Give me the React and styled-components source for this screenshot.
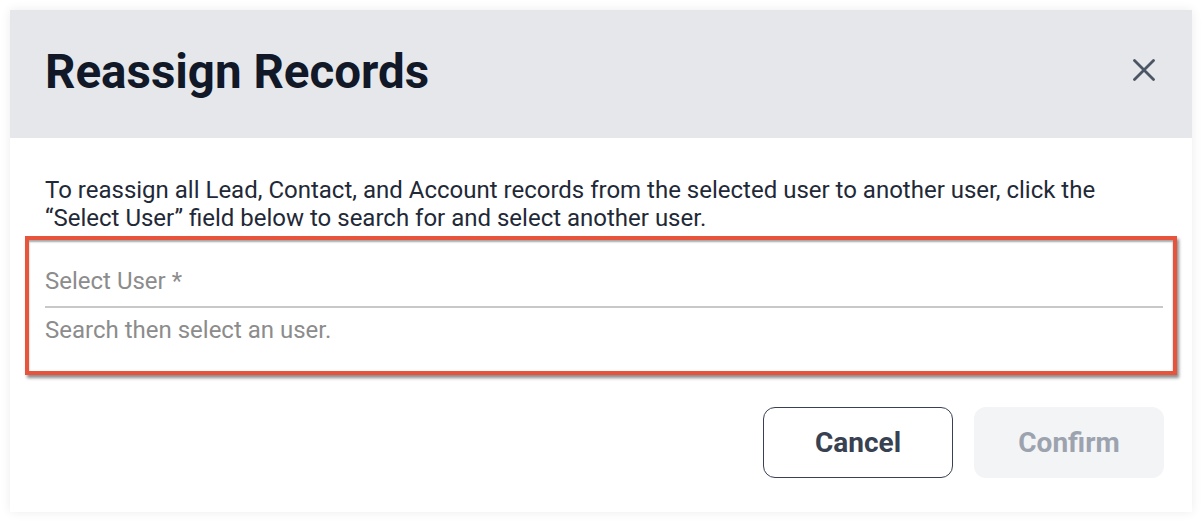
import React from "react";
import styled, { createGlobalStyle } from "styled-components";

const GlobalStyle = createGlobalStyle`
    html, body {
        margin: 0;
        padding: 0;
        background: #ffffff;
        font-family: Roboto, "Liberation Sans", sans-serif;
    }
`;

const Page = styled.div`
    padding: 10px;
`;

const Dialog = styled.div`
    width: 1182px;
    height: 502px;
    background: #ffffff;
    box-shadow: 0 0 10px rgba(0, 0, 0, 0.08);
    display: flex;
    flex-direction: column;
`;

const Header = styled.div`
    height: 128px;
    background: #e5e7eb;
    display: flex;
    align-items: center;
    justify-content: space-between;
    padding: 0 37px 8px 35px;
    box-sizing: border-box;
`;

const Title = styled.h2`
    margin: 3px 0 0;
    font-size: 47.5px;
    font-weight: 700;
    color: #111827;
    letter-spacing: 0;
`;

const CloseButton = styled.button`
    border: none;
    background: none;
    padding: 0;
    width: 22px;
    height: 22px;
    cursor: pointer;
    display: flex;
`;

const Body = styled.div`
    flex: 1;
    padding: 38px 28px 0 35px;
    display: flex;
    flex-direction: column;
`;

const Intro = styled.p`
    margin: 0;
    font-size: 24px;
    line-height: 28px;
    color: #1f2937;
`;

// red annotation frame drawn around the field in the screenshot
const Highlight = styled.div`
    margin: 4px -13px 0 -20px;
    border: 4px solid #e8533b;
    padding: 27px 10px 27px 16px;
    box-shadow: 2px 3px 3px rgba(0, 0, 0, 0.45), inset 0 2px 2px rgba(0, 0, 0, 0.35);
`;

const Label = styled.div`
    font-size: 24px;
    line-height: 28px;
    color: #8c8c8c;
    padding-bottom: 11px;
    border-bottom: 2px solid #c8c8c8;
`;

const Helper = styled.div`
    font-size: 24px;
    line-height: 28px;
    color: #8c8c8c;
    padding-top: 8px;
`;

const Footer = styled.div`
    display: flex;
    justify-content: flex-end;
    gap: 21px;
    margin-top: 32px;
`;

const Button = styled.button`
    width: 190px;
    height: 71px;
    border-radius: 12px;
    font-family: Roboto, "Liberation Sans", sans-serif;
    font-size: 28px;
    font-weight: 700;
    box-sizing: border-box;
    border: ${p => (p.$disabled ? "none" : "1px solid #374151")};
    background: ${p => (p.$disabled ? "#f3f4f6" : "#ffffff")};
    color: ${p => (p.$disabled ? "#9ca3af" : "#374151")};
    cursor: ${p => (p.$disabled ? "default" : "pointer")};
`;

function App() {
    return (
        <Page>
            <GlobalStyle />
            <Dialog>
                <Header>
                    <Title>Reassign Records</Title>
                    <CloseButton aria-label="Close">
                        <svg width="22" height="22" viewBox="0 0 22 22" fill="none">
                            <path d="M1.5 1.5 L20.5 20.5 M20.5 1.5 L1.5 20.5" stroke="#4b5563" strokeWidth="2.8" strokeLinecap="round" />
                        </svg>
                    </CloseButton>
                </Header>
                <Body>
                    <Intro>
                        To reassign all Lead, Contact, and Account records from the selected user to another user, click the
                        “Select User” field below to search for and select another user.
                    </Intro>
                    <Highlight>
                        <Label>Select User *</Label>
                        <Helper>Search then select an user.</Helper>
                    </Highlight>
                    <Footer>
                        <Button>Cancel</Button>
                        <Button $disabled>Confirm</Button>
                    </Footer>
                </Body>
            </Dialog>
        </Page>
    );
}

export default App;
